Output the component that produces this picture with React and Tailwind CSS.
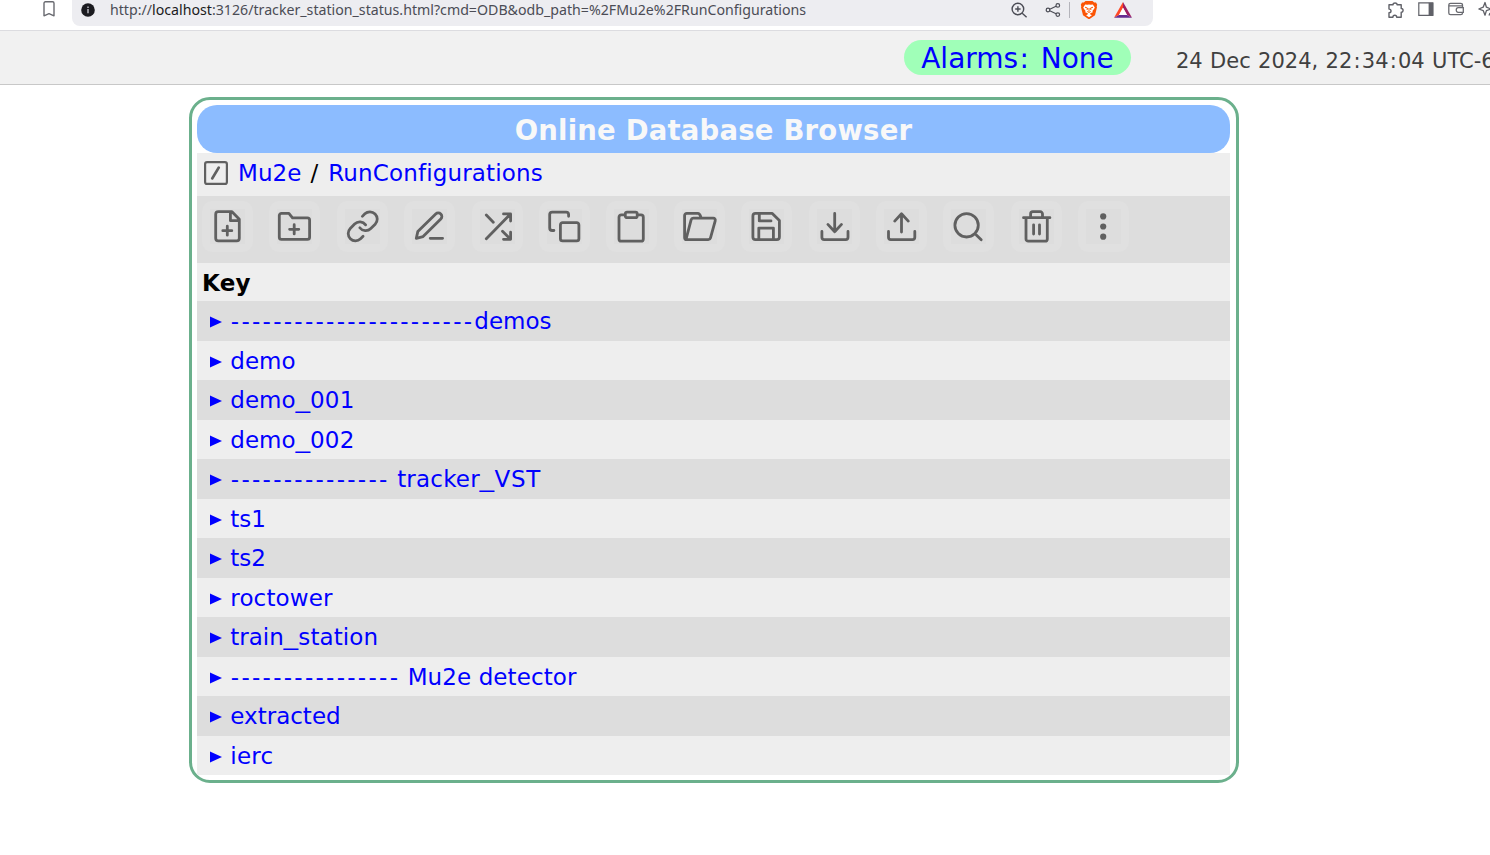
import React from "react";

const P = {
  filePlus: (
    <path d="M16.3 10.7h13.700l7.300 7.600v19a2.600 2.600 0 0 1-2.600 2.600H16.300a2.600 2.600 0 0 1-2.600-2.600V13.300a2.600 2.600 0 0 1 2.600-2.600ZM28.400 11.500v8.200h8.200M25.300 25.200v9M20.800 29.700h9" />
  ),
  folderPlus: (
    <path d="M10.3 36.200V14.600a2.200 2.200 0 0 1 2.200-2.200h7.400l3.600 4.500h14.900a2.200 2.200 0 0 1 2.200 2.200v17.100a2.200 2.200 0 0 1-2.200 2.200H12.500a2.200 2.200 0 0 1-2.200-2.200ZM25.200 23.700v9.200M20.600 28.300h9.200" />
  ),
  link: (
    <g transform="translate(8.2 7.8) scale(1.46)" strokeWidth="1.9">
      <path d="M10 13a5 5 0 0 0 7.540.540l3-3a5 5 0 0 0-7.070-7.070l-1.720 1.710" />
      <path d="M14 11a5 5 0 0 0-7.540-.540l-3 3a5 5 0 0 0 7.070 7.070l1.710-1.710" />
    </g>
  ),
  pencil: (
    <path d="m12.300 37.300 1.500-6.700 17.900-17.600a3.600 3.600 0 0 1 5.100 5.100L19.100 35.600ZM26.200 37.300h12.400" />
  ),
  shuffle: (
    <path d="M14.300 37.800 38.500 12.900M31.500 12.900h7.100v7.100M38.600 31.200v7.100h-7.100M30.500 30.300l8 8M14.300 14l7 7.200" />
  ),
  copy: (
    <path d="M23.6 21.700h14.100a2.200 2.200 0 0 1 2.200 2.200v13.800a2.200 2.200 0 0 1-2.200 2.200H23.600a2.200 2.200 0 0 1-2.200-2.200V23.900a2.200 2.200 0 0 1 2.200-2.200ZM14.900 29.500h-1.700a2.500 2.500 0 0 1-2.500-2.500V13.600a2.500 2.500 0 0 1 2.500-2.500h13.900a2.500 2.500 0 0 1 2.500 2.500v1.700" />
  ),
  paste: (
    <path d="M19.200 13.900h-3.900a2.300 2.300 0 0 0-2.300 2.300v21.700a2.300 2.300 0 0 0 2.300 2.300h19.700a2.300 2.300 0 0 0 2.300-2.300V16.200a2.300 2.300 0 0 0-2.300-2.300H31.200M21 11.100h8.500a1.700 1.700 0 0 1 1.700 1.700v2.200a1.700 1.700 0 0 1-1.700 1.700H21a1.700 1.700 0 0 1-1.700-1.700v-2.200a1.700 1.700 0 0 1 1.700-1.700Z" />
  ),
  folderOpen: (
    <path d="m12 38.400 5.100-19.600a2.200 2.200 0 0 1 2.100-1.600h20a2 2 0 0 1 2 2.600l-4.700 17.100a2.300 2.300 0 0 1-2.200 1.700H12.800a2.200 2.200 0 0 1-2.200-2.200V14.600a2.200 2.200 0 0 1 2.200-2.200h11q2 0 3.200 4.100" />
  ),
  save: (
    <path d="M14.5 12.400h16.800l7.100 7.100v16.500a2.600 2.600 0 0 1-2.600 2.600H14.500a2.600 2.600 0 0 1-2.600-2.600V15a2.600 2.600 0 0 1 2.600-2.600ZM17.800 38.300V27.100h14.600v11.200M18.300 12.800v7.100h11.700" />
  ),
  download: <path d="M25.700 12.400v18.300M18.900 23.400l6.800 7.300 6.800-7.300M12.900 30.400v5.900a2.300 2.300 0 0 0 2.300 2.300h21.500a2.300 2.300 0 0 0 2.300-2.300v-5.900" />,
  upload: <path d="M25.500 31V12.800M18.700 20.100l6.800-7.300 6.800 7.300M12.500 30.400v5.900a2.300 2.300 0 0 0 2.300 2.300h21.700a2.300 2.300 0 0 0 2.300-2.300v-5.900" />,
  search: <path d="M11.900 24.300a11.700 11.700 0 1 0 23.400 0a11.700 11.700 0 1 0-23.400 0M33.300 33.900l4.900 4.800" />,
  trash: (
    <path d="M12.500 16.700h26.400M15 16.700v21.200a2.300 2.300 0 0 0 2.300 2.300h16.700a2.300 2.300 0 0 0 2.300-2.300V16.700M19.600 16v-3a2.300 2.300 0 0 1 2.300-2.300h7.300a2.300 2.300 0 0 1 2.300 2.300V16M22.600 23.800v9.200M28.500 23.800v9.200" />
  ),
  more: (
    <g fill="#606060" stroke="none">
      <circle cx="25.2" cy="15.4" r="3.1" />
      <circle cx="25.2" cy="25.5" r="3.1" />
      <circle cx="25.2" cy="35.7" r="3.1" />
    </g>
  ),
};
const tools = Object.keys(P);

const underscore = <span className="mx-[1.5px] inline-block scale-x-[1.27]">_</span>;

const rows = [
  ["-----------------------", "demos"],
  ["", "demo"],
  ["", <>demo{underscore}<span className="tracking-[0.2px]">001</span></>],
  ["", <>demo{underscore}<span className="tracking-[0.2px]">002</span></>],
  ["---------------", <><span className="tracking-[0.2px]"> tracker</span>{underscore}<span className="tracking-[0.8px]">VST</span></>],
  ["", "ts1"],
  ["", "ts2"],
  ["", <span className="tracking-[0.15px]">roctower</span>],
  ["", <>train{underscore}<span className="tracking-[0.1px]">station</span></>],
  ["----------------", <span className="tracking-[0.1px]"> Mu2e detector</span>],
  ["", "extracted"],
  ["", <span className="tracking-[0.2px]">ierc</span>],
];

function BrowserBar() {
  return (
    <div className="flex h-[31px] shrink-0 items-start border-b border-[#dcdce0] bg-white">
      <svg className="ml-[42px] h-[20px] w-[14px] shrink-0" viewBox="0 0 14 20" fill="none" stroke="#696a70" strokeWidth="1.4">
        <path d="M2 15.8V3.200c0-.9.6-1.400 1.400-1.400h7.200c.8 0 1.400.5 1.400 1.400v12.600l-5-2.200Z" strokeLinejoin="round" />
      </svg>
      <div className="ml-[16px] flex h-[26px] w-[1081px] shrink-0 items-start rounded-b-[8px] bg-[#ededf1]">
        <svg className="mt-[3px] ml-[9px] h-[14px] w-[14px]" viewBox="0 0 14 14">
          <circle cx="7" cy="7" r="6.8" fill="#1b1b20" />
          <path d="M7 6v4.300M7 3.400v1.500" stroke="#b8b8be" strokeWidth="1.5" />
        </svg>
        <div className="ml-[15px] w-[900px] shrink-0 whitespace-nowrap font-['Noto_Sans',sans-serif] text-[14.18px] leading-[19px] text-[#4b4c55]">
          http://<span className="text-[#1b1b20]">localhost</span>:3126/tracker_station_status.html?cmd=ODB&amp;odb_path=%2FMu2e%2FRunConfigurations
        </div>
        <svg className="mt-[1px] h-[18px] w-[18px] shrink-0" viewBox="0 0 18 18" fill="none" stroke="#4b4c55" strokeWidth="1.4">
          <circle cx="7.9" cy="8" r="5.8" />
          <path d="m12.200 12.300 4.400 4M5.200 8h5.400M7.900 5.300v5.400" />
        </svg>
        <svg className="mt-[2px] ml-[17px] h-[16px] w-[16px] shrink-0" viewBox="0 0 16 16" fill="none" stroke="#4b4c55" strokeWidth="1.2">
          <circle cx="3" cy="8" r="1.8" />
          <circle cx="12.8" cy="3.4" r="1.8" />
          <circle cx="12.8" cy="12.6" r="1.8" />
          <path d="m4.700 7.200 6.400-3M4.700 8.800l6.400 3" />
        </svg>
        <div className="mt-[2px] ml-[8px] h-[16px] w-px bg-[#b4b4bb]" />
        <svg className="mt-[1px] ml-[10px] h-[18px] w-[18px] shrink-0" viewBox="0 0 18 18">
          <path d="M5.5 0h7l1.700 1.600 1.800-.2 1.200 2.400-.5 1.500.3 1-2 8L9 18.400l-6-4.100-2-8 .3-1L.8 3.800 2 1.400l1.800.2Z" fill="#fb5405" />
          <path d="m5.200 3.400 2 .4L9 3.500l1.800.3 2-.4 2 3-.8 1.500-1.600 2 .4 1.300-2 .8-1 1 2.100 1.200L9 16.200l-2.900-2 2.100-1.200-1-1-2-.8.4-1.300L4 7.900l-.8-1.500Z" fill="#fff" />
          <path d="m5 6.200 2.400.8-.3 2M13 6.200l-2.400.8.3 2M9 7v3.500M7.300 10.500 9 11.400l1.700-.9" fill="none" stroke="#fb5405" strokeWidth="1" />
        </svg>
        <svg className="mt-[1px] ml-[16px] h-[18px] w-[18px] shrink-0" viewBox="0 0 18 18">
          <path d="M9 1 0 16.700l5-2.800L9 6.800Z" fill="#ff4724" />
          <path d="m9 1 9 15.700-5-2.800L9 6.800Z" fill="#9e1f63" />
          <path d="m0 16.700 5-2.800h8l5 2.800Z" fill="#662d91" />
          <path d="m9 6.800 4 7.100H5Z" fill="#fff" />
        </svg>
      </div>
      <svg className="ml-[234px] h-[20px] w-[18px] shrink-0" viewBox="0 0 18 20" fill="none" stroke="#606168" strokeWidth="1.4" strokeLinejoin="round">
        <path d="M2 4.700h4.100c-.3-2.300 4.200-2.300 3.900 0h4.200v3.800c2.500-.3 2.500 4 0 3.800v4.900h-4.500c0-2.700-3.800-2.700-3.800 0H2v-4.500c2.700 0 2.700-3.600 0-3.600Z" />
      </svg>
      <svg className="mt-[2px] ml-[13px] h-[14px] w-[16px] shrink-0" viewBox="0 0 16 14">
        <path d="M.8.8h14v12.600H.8Z" fill="none" stroke="#606168" strokeWidth="1.2" />
        <path d="M10.600.8h4.700v12.800h-4.700Z" fill="#606168" />
      </svg>
      <svg className="mt-[2px] ml-[14px] h-[14px] w-[16px] shrink-0" viewBox="0 0 16 14" fill="none" stroke="#696a70" strokeWidth="1.3">
        <path d="M14.500 5V3c0-1-.7-1.700-1.700-1.700H2.500C1.400 1.300.8 2 .8 3v8c0 1 .7 1.700 1.700 1.700h10.300c1 0 1.700-.7 1.700-1.700M.8 3.800h13.700M15.300 5.600H10.200c-2.600 0-2.600 4.800 0 4.800h5.100Z" />
      </svg>
      <svg className="mt-[1px] ml-[14px] h-[18px] w-[12px] shrink-0" viewBox="0 0 12 18" fill="none" stroke="#606168" strokeWidth="1.3" strokeLinejoin="round">
        <path d="M7 1.500 8.400 6.200 13 8l-4.600 1.600L7 14.200 5.200 9.600.8 8l4.400-1.800ZM12 12l-1 2.500" />
      </svg>
    </div>
  );
}

export default function App() {
  return (
    <div className="flex h-[855px] w-[1490px] flex-col overflow-hidden bg-white font-['DejaVu_Sans',sans-serif] [font-variant-ligatures:none]">
      <BrowserBar />
      <header className="flex h-[54px] shrink-0 items-start border-b border-[#c8c8c8] bg-[#f1f1f1]">
        <div className="mt-[9px] ml-[904px] flex h-[35px] w-[227px] shrink-0 items-center justify-center whitespace-pre rounded-full bg-[#a0ffb8] pt-[2px] text-[28px] text-[#0000ff]">
          <span>Alarms<span className="px-[1.2px]">:</span> </span>
          <span className="ml-[1.8px]">None</span>
        </div>
        <div className="mt-[15px] ml-[45px] shrink-0 whitespace-nowrap text-[21px] leading-[30px] text-[#404040] [word-spacing:0.7px]">
          24 Dec 2024, 22<span className="px-[1.2px]">:</span>34<span className="px-[1.2px]">:</span>04 UTC-6
        </div>
      </header>
      <main className="mt-[12px] ml-[189px] flex h-[686px] w-[1050px] shrink-0 flex-col rounded-[21px] border-[3px] border-[#6bb08c] p-[5px] pr-[6px]">
        <h1 className="flex h-[48px] shrink-0 items-center justify-center rounded-[20px] bg-[#8cbcff] pt-[3px] text-[27.5px] font-bold tracking-[0.2px] text-[#f8f8f8]">
          Online Database Browser
        </h1>
        <nav className="flex h-[43px] shrink-0 items-center whitespace-pre bg-[#eeeeee] pb-[3px] pl-[7px] text-[23px] text-[#0000ff]">
          <svg className="mb-[1px] mr-[10px] h-[24px] w-[24px]" viewBox="0 0 24 24" fill="none" stroke="#606060" strokeWidth="2.2">
            <rect x="1.1" y="1.1" width="21.8" height="21.8" rx="2" />
            <path d="m8.200 17.500 6.600-11" strokeWidth="2.600" strokeLinecap="round" />
          </svg>
          <span className="tracking-[0.1px]">Mu2e</span>
          <span className="pr-[2.6px] pl-[1.6px] text-black"> / </span>
          <span className="tracking-[0.15px]">RunConfigurations</span>
        </nav>
        <div className="flex h-[67px] shrink-0 gap-[16.4px] bg-[#dddddd] pt-[5px] pl-[5px]">
          {tools.map((name) => (
            <div key={name} className="flex h-[51px] w-[51px] shrink-0 items-center justify-center rounded-[10px] bg-[#e0e0e0]">
              <div className="flex h-[35px] w-[35px] items-center justify-center bg-[#dddddd]">
                <svg className="h-[51px] w-[51px] shrink-0" viewBox="0 0 51 51" fill="none" stroke="#606060" strokeWidth="2.800" strokeLinecap="round" strokeLinejoin="round">
                  {P[name]}
                </svg>
              </div>
            </div>
          ))}
        </div>
        <div className="flex h-[38px] shrink-0 items-center bg-[#eeeeee] pt-[2px] pl-[5px] text-[23px] font-bold tracking-[0.3px]">Key</div>
        <div className="flex flex-col">
          {rows.map(([dashes, label], i) => (
            <div key={i} className="flex h-[39.5px] shrink-0 items-center whitespace-pre pl-[13px] text-[23px] text-[#0000ff] odd:bg-[#dddddd] even:bg-[#eeeeee] even:pt-[1px]">
              <svg className="mt-[3px] mr-[8.3px] h-[12px] w-[12px]" viewBox="0 0 12 12">
                <path d="M0 .5 12 6 0 11.500Z" fill="#0000ff" />
              </svg>
              {dashes && <span className="ml-[0.5px] tracking-[2.290px]">{dashes}</span>}
              <span>{label}</span>
            </div>
          ))}
        </div>
      </main>
    </div>
  );
}
